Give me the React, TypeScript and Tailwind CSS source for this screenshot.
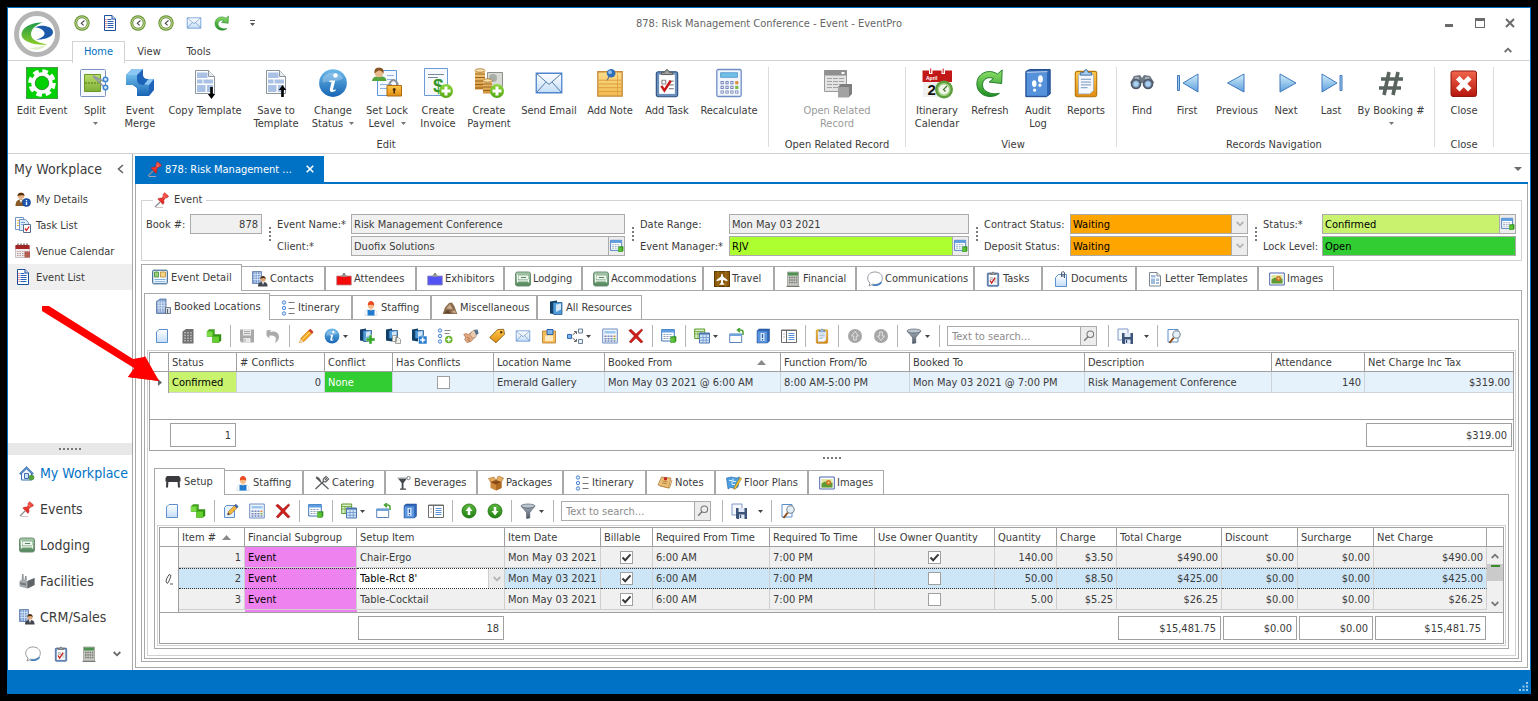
import { Fragment, type ReactNode } from 'react'

// 16x16 artwork, shared by the quick access bar, side bar, tabs and toolbars
const art: Record<string, ReactNode> = {
  clock: (
    <>
      <circle cx="8" cy="8" r="7.7" fill="#5f8c2a" />
      <circle cx="8" cy="8" r="6.8" fill="#b4d481" />
      <circle cx="8" cy="8" r="5.2" fill="#fff" stroke="#5f7f3a" strokeWidth=".8" />
      <path d="M10.500 5.500 7.300 8.200 9.600 10.400" fill="none" stroke="#444" strokeWidth="1.100" />
    </>
  ),
  doc: (
    <>
      <path d="M2.500.5h7.500l3.500 3.500v11.500h-11z" fill="#fff" stroke="#1e4f9c" />
      <path d="M10 .5V4h3.500" fill="#cfe0f7" stroke="#1e4f9c" />
      <path d="M5.500 4.500h4M5.500 6.500h6M5.500 8.500h6M5.500 10.500h6M5.500 12.500h6" stroke="#2b5fb8" />
      <path d="M3.500 4.500h1M3.500 6.500h1M3.500 8.500h1M3.500 10.500h1M3.500 12.500h1" stroke="#e03030" />
    </>
  ),
  mail: (
    <>
      <path d="M1.200 2.800h13.600v10.400H1.200z" fill="url(#gPaper)" stroke="#4f86cf" strokeWidth=".7" />
      <path d="m1.400 3 6.600 5.800L14.600 3M1.400 13l5-5.500M14.600 13l-5-5.500" fill="none" stroke="#4a73a8" strokeWidth=".5" />
    </>
  ),
  refresh: (
    <path
      d="M13 13.500C9 17 1 15 1 8.500 1 3 7 0 12 3.200L14.500 1l-.3 7.300-6.700-.8 2.300-1.900C7 4.300 4 6 4 9c0 3.500 4.500 5.500 9 4.500z"
      fill="url(#gGreen)"
      stroke="#1c7a26"
      strokeWidth=".5"
    />
  ),
  person: (
    <>
      <path d="M.5 15c0-5 2-6.500 5.500-6.500s5 2 5 6.500z" fill="#8a5a28" />
      <path d="M4.500 9 6 12l1.500-3z" fill="#f3efe6" />
      <circle cx="6" cy="4.800" r="3.300" fill="#e6b080" />
      <path d="M2.500 5C2.300.8 9.700.3 9.500 5 8.500 3.500 4.500 4.500 2.500 5z" fill="#54310f" />
      <circle cx="11.500" cy="11.500" r="4" fill="#1b57b5" stroke="#0d3a85" strokeWidth=".6" />
      <path d="M11.500 9v1.200M11.500 11v3" stroke="#fff" strokeWidth="1.300" />
    </>
  ),
  tasklist: (
    <>
      <path d="M.5.5h8v12h-8z" fill="#fff" stroke="#6f96c6" />
      <path d="M2 3.500h3M2 6h3M2 8.500h3" stroke="#e2b040" />
      <path d="M4.500 2.500h6l3 3v8h-9z" fill="#dcebfa" stroke="#6f96c6" />
      <path d="M6 5.500h4M6 7.500h4" stroke="#7aa5dd" />
      <path d="M8.500 7.500h7v8h-7z" fill="#fff" stroke="#5a6f90" />
      <path d="m10 11.500 1.500 2 2.700-4" fill="none" stroke="#cf1f1f" strokeWidth="1.300" />
    </>
  ),
  calendar: (
    <>
      <path d="M.5 3h14v11.500H.5z" fill="#efecec" stroke="#a7a0a0" strokeWidth=".6" />
      <path d="M.5 2h14v4H.5z" fill="#a62424" />
      <path d="M3 .5v2.500M6 .5v2.500M9 .5v2.500M12 .5v2.500" stroke="#6e3c3c" strokeWidth="1.200" />
      <path d="M2 8.500h11M2 10.500h11M2 12.500h11" stroke="#b89a9a" strokeDasharray="1.500 1" />
      <path d="M9.500 8.500H15v6H9.500z" fill="#b55d50" />
    </>
  ),
  pin: (
    <>
      <path d="M6 10 1 15" stroke="#8b8f94" strokeWidth="1.200" />
      <path d="M3.800 7c1.500-1 2.900-1 4.300-.8L9.200 4c-.5-1 .1-2.500 1.500-3.300L14.500 4c-.5 1.600-2 2.200-3.100 1.900L9.700 8.300c.6 1.500.3 2.800-.7 4.100z" fill="url(#gPin)" stroke="#b01212" strokeWidth=".5" />
      <path d="m9.500 4 2 1.700" stroke="#ff9d8f" />
      <path d="M2 15.500h7" stroke="#c7b4b4" strokeWidth=".8" />
    </>
  ),
  bed: (
    <>
      <rect x=".5" y="1" width="15" height="14" rx="2" fill="url(#gBed)" stroke="#6d8f73" />
      <path d="M2.500 3.500v8M13.500 8v3.500M2.500 9.800h11" stroke="#f0f7f0" strokeWidth="1.200" />
      <path d="M4 5h9v3H4z" fill="#dff0df" stroke="#fff" strokeWidth=".8" />
      <path d="M6 6.500h5" stroke="#4a7a52" strokeWidth=".9" />
    </>
  ),
  factory: (
    <>
      <path d="M3 1h1.500l.3 6H2.700zM6 3h1.500l.3 4H5.700z" fill="#8e9499" />
      <path d="m.5 8 4-2 4 2 7-3v7l-7 3.500-8-2z" fill="#a4a9ad" />
      <path d="m8.500 8 7-3v7l-7 3.500z" fill="#5e6468" />
      <path d="M2 9.500v2M4 10v2M6 10.300v2" stroke="#42484c" />
    </>
  ),
  contacts: (
    <>
      <path d="M.5.5h9v12h-9z" fill="#7c9fd0" stroke="#5d7cab" strokeWidth=".8" />
      <path d="M3 1v11M5.500 1v11M8 1v11M1 3.500h8M1 6h8M1 8.500h8" stroke="#d8e5f7" strokeWidth=".8" />
      <path d="M6 15.500c0-3.500 1.500-4.500 4.800-4.500s4.700 1 4.700 4.500z" fill="#42464f" />
      <circle cx="11" cy="8" r="2.700" fill="#e0a878" />
      <path d="M8.300 8c.2-4 5.300-3.700 5.400 0-1.500-1.400-3.500-1-5.400 0z" fill="#463018" />
      <path d="m10 11 1 3 1-3z" fill="#fff" />
    </>
  ),
  home: (
    <>
      <path d="M2.500 8v7h10V8L7.500 3z" fill="#f4f7fb" stroke="#3f6fae" />
      <path d="M.5 8.500 7.500 1.500l7 7-1.200 1L7.500 4l-5.800 5.500z" fill="#5d93d2" stroke="#2e5f9e" strokeWidth=".6" />
      <path d="M5.500 8.500h4v5h-4z" fill="#cfe3f8" stroke="#3f6fae" />
      <circle cx="12.500" cy="12.500" r="2.500" fill="#56a63c" stroke="#2f7a1f" strokeWidth=".5" />
    </>
  ),
  chat: (
    <>
      <path d="M8 1c4.300 0 7.300 2.500 7.300 6.200S12.300 13.400 8 13.400c-.9 0-1.500-.1-2.200-.3L2 15l1-3C1.500 10.800.7 9.200.7 7.200.700 3.500 3.700 1 8 1z" fill="#fff" stroke="#8a8f96" strokeWidth=".9" />
      <path d="M5.500 14c3.500.8 7-.3 9-2.800" fill="none" stroke="#3f7fc0" strokeWidth="1.400" />
    </>
  ),
  clipcheck: (
    <>
      <rect x="2.300" y="2" width="11.400" height="13.300" rx="1" fill="#6a8fbc" stroke="#2c4e7e" strokeWidth=".6" />
      <path d="M3.800 3.500h8.400v10.300H3.800z" fill="#fff" />
      <path d="M5 3.500V2.300h1.700Q8-.6 9.300 2.300H11v1.200z" fill="#a0a0a0" stroke="#555" strokeWidth=".5" />
      <path d="M5.300 6.500h2v2h-2zM9 7h2.600M9 9h2.600M9 11h2.600" fill="none" stroke="#8b8b8b" strokeWidth=".6" />
      <path d="M5 9.500 6.600 12 10 6.800" fill="none" stroke="#c81818" strokeWidth="1.300" />
    </>
  ),
  calc: (
    <>
      <path d="M2.500 1h11v14h-11z" fill="#c6c9c1" stroke="#85887f" strokeWidth=".6" />
      <path d="M3 1.500h10v3H3z" fill="#4e9150" />
      <path d="M4 6.500h8.500M4 9h8.500M4 11.500h8.500" stroke="#777a73" strokeWidth="1.400" strokeDasharray="1.500 .8" />
      <path d="M1.500 15.500h13" stroke="#777a73" />
    </>
  ),
  detail: (
    <>
      <rect x=".7" y="1.200" width="14.600" height="13.600" rx="1" fill="#f2f8ff" stroke="#24567f" />
      <path d="M2.500 3h4v5h-4z" fill="#9ad07a" stroke="#3f8c2f" strokeWidth=".8" />
      <path d="M8.500 3h5v5h-5z" fill="#f6d58d" stroke="#be8a2a" strokeWidth=".8" />
      <path d="M2.500 10.500h11M2.500 12.700h11" stroke="#7fb0dd" />
    </>
  ),
  badgeRed: (
    <>
      <path d="M7 5.500V3q1-1.500 2 0v2.500" fill="#aaa" stroke="#777" />
      <path d="M.7 5h14.600v9H.7z" fill="#f40808" stroke="#b98a8a" strokeWidth=".8" />
      <path d="M5.500 5h5" stroke="#999" strokeWidth="1.500" />
    </>
  ),
  badgeBlue: (
    <>
      <path d="M7 5.500V3q1-1.500 2 0v2.500" fill="#aaa" stroke="#777" />
      <path d="M.7 5h14.600v9H.7z" fill="#5252f5" stroke="#8f8fae" strokeWidth=".8" />
      <path d="M5.500 5h5" stroke="#999" strokeWidth="1.500" />
    </>
  ),
  plane: (
    <>
      <rect x=".5" y=".5" width="15" height="15" fill="#8a5a0c" stroke="#5f3c05" />
      <path d="M4 0v16M12 0v16" stroke="#a9731c" />
      <path d="M8 2.500q1 .5 1 3L13.500 9v1.300L9 9v2.800l1.500 1.200v.8H5.500V13L7 11.800V9l-4.500 1.300V9L7 5.500q0-2.500 1-3z" fill="#fff" />
    </>
  ),
  clipdoc: (
    <>
      <path d="m5.500 3.500-3 3v9h11v-12z" fill="url(#gPaper)" stroke="#5c8fcd" />
      <path d="M8.500 6V1.500q1.500-1.800 3 0V7M10 3v3" fill="none" stroke="#4a5a70" />
    </>
  ),
  template: (
    <>
      <path d="M2.500 1.500h7.500l3.500 3.500v10h-11z" fill="#fff" stroke="#7d8791" />
      <path d="M10 1.500V5h3.500" fill="#e6ecf2" stroke="#7d8791" />
      <path d="M4 4h4.500v2.500H4zM4 7.500h4V13H4zM9 7.500h3V10H9zM9 11h3v2H9z" fill="#9ebbe0" />
    </>
  ),
  image: (
    <>
      <path d="M.7 2h14.600v12H.7z" fill="#fff" stroke="#4d66ad" />
      <path d="M2.500 4h11v8.500h-11z" fill="#dfe7a0" />
      <path d="M2.500 8.500 6 6.500l3 2 4.500-1v5h-11z" fill="#5d9a35" />
      <circle cx="9.500" cy="7.500" r="2.600" fill="#c9762a" />
      <circle cx="9.500" cy="7.500" r="1" fill="#f7d070" />
    </>
  ),
  building: (
    <>
      <path d="M1.500 3.500 5 1h6v14.500H1.500z" fill="#8ba9d4" stroke="#51709f" strokeWidth=".8" />
      <path d="M4 3v11M6.500 3v11M9 3v11M2 5h8.500M2 7.500h8.500M2 10h8.500" stroke="#e3edf9" strokeWidth=".7" />
      <path d="M10.500 9.500h5v6h-5z" fill="#d7dee9" stroke="#55606f" strokeWidth=".8" />
      <path d="M12.500 11v4" stroke="#55606f" />
    </>
  ),
  buildingGray: (
    <>
      <path d="M2.500 3.500 6 1h7.500v14.500h-11z" fill="#707070" />
      <path d="M5 4v10M8 4v10M11 4v10" stroke="#cfcfcf" strokeWidth="1.300" strokeDasharray="1.500 1.200" />
    </>
  ),
  itinerary: (
    <>
      <circle cx="4" cy="2.500" r="1.700" fill="#e4effc" stroke="#4f86d6" />
      <circle cx="4" cy="8" r="1.700" fill="#e4effc" stroke="#4f86d6" />
      <circle cx="4" cy="13.500" r="1.700" fill="#e4effc" stroke="#4f86d6" />
      <path d="M8.500 2.500h6M8.500 8.500h6M8.500 13.500h6" stroke="#777" />
    </>
  ),
  itinAdd: (
    <>
      <circle cx="3" cy="2.500" r="1.700" fill="#e4effc" stroke="#4f86d6" />
      <circle cx="3" cy="8" r="1.700" fill="#e4effc" stroke="#4f86d6" />
      <circle cx="3" cy="13.500" r="1.700" fill="#e4effc" stroke="#4f86d6" />
      <path d="M7.500 2.500h6M7.500 5.500h5" stroke="#888" />
      <circle cx="11.800" cy="11.500" r="3.800" fill="#6cb52e" />
      <path d="M11.800 9.200v4.600M9.500 11.500h4.600" stroke="#fff" strokeWidth="1.400" />
    </>
  ),
  staff: (
    <>
      <path d="M2 15.500C1.700 10.500 4 9 8 9s6.300 1.500 6 6.500z" fill="#fff" stroke="#b8c6d3" strokeWidth=".5" />
      <path d="M4.500 10h7v5.500h-7z" fill="#1f7bd0" />
      <circle cx="8" cy="5.800" r="3" fill="#f2b986" />
      <path d="M4.800 5.500C4.500-.5 11.500-.5 11.200 5.500 9.500 4.500 6.500 4.500 4.800 5.500z" fill="#ea4a1f" />
      <path d="M6.500 9.500 8 11l1.500-1.500z" fill="#f2b986" />
    </>
  ),
  misc: (
    <>
      <path d="M.7 14 3 7.500 7 3l3-.5 2.500 4 2.800 7.500z" fill="#8a6a4c" />
      <path d="M4 8.500 8 4l3 5.500zM9 12l4-2 1 3.500z" fill="#c9a98a" />
      <path d="m2 13 4-3 3 3.500z" fill="#5d4630" />
    </>
  ),
  book: (
    <>
      <path d="m2 1.500 7-1v14l-7-1z" fill="#123f68" />
      <path d="M5 2.500h9v12H6.500L5 14z" fill="#4f9ad8" stroke="#1d4d7c" strokeWidth=".7" />
      <path d="m8 4.500 5-1v6L8 12z" fill="#d2e6f8" />
    </>
  ),
  bookPlus: (
    <>
      <path d="m1 1.500 6-1v13l-6-1z" fill="#123f68" />
      <path d="M4 2.500h8.500v11H5L4 13z" fill="#4f9ad8" stroke="#1d4d7c" strokeWidth=".7" />
      <path d="m7 4 4.500-1v4L7 9.500z" fill="#d2e6f8" />
      <path d="M10 7h3v3h3v3h-3v3h-3v-3H7v-3h3z" fill="#35a82c" stroke="#fff" strokeWidth=".4" />
    </>
  ),
  bookCopy: (
    <>
      <path d="m1 1.500 6-1v13l-6-1z" fill="#123f68" />
      <path d="M4 2.500h8.500v8H4z" fill="#4f9ad8" stroke="#1d4d7c" strokeWidth=".7" />
      <path d="m7 4 4.500-1v4L7 9.500z" fill="#d2e6f8" />
      <path d="M7.500 7.500h4v6h-4zM10.500 9.500h3l2 2v4h-5z" fill="#f1f1ee" stroke="#8d8d88" strokeWidth=".8" />
    </>
  ),
  bookAdd: (
    <>
      <path d="m1 1.500 6-1v13l-6-1z" fill="#123f68" />
      <path d="M4 2.500h8.500v8H4z" fill="#4f9ad8" stroke="#1d4d7c" strokeWidth=".7" />
      <path d="m7 4 4.500-1v4L7 8.500z" fill="#d2e6f8" />
      <path d="M7.500 8H16v8H7.500z" fill="#2f7fd1" stroke="#fff" strokeWidth=".5" />
      <path d="M11.700 9.500v5M9.200 12h5" stroke="#fff" strokeWidth="1.500" />
    </>
  ),
  blank: <path d="m5 1.500-2.500 2.500v10.500h11v-13z" fill="url(#gPaper)" stroke="#5c8fcd" />,
  cubes: (
    <>
      <path d="m1 3.500 2-2h5.500v5l-2 2H1z" fill="#3fa519" stroke="#2f8710" strokeWidth=".4" />
      <path d="M1 3.500h5.500v5H1z" fill="#7bdc45" />
      <path d="m6.500 8.500 2-2H15v6l-2 2H6.500z" fill="#2f9410" stroke="#2f8710" strokeWidth=".4" />
      <path d="M6.500 8.500H13v6H6.500z" fill="#66cf30" />
    </>
  ),
  save: (
    <>
      <path d="M1 1.500h14v13H2.500L1 13z" fill="#a8a8a8" />
      <path d="M4 1.500h8v6H4zM4.500 10h7v4.500h-7z" fill="#e9e9e9" />
      <path d="M5 3.500h6M5 5.500h6M6 11v2.500" stroke="#a8a8a8" />
    </>
  ),
  undo: <path d="M1.500 2.500 6 1.800 5 4c4-1.500 9 0 9 5 0 3-2 5-4.500 6 2.500-3.500 2-7.500-3-7.500L4 7.800l.8 2.700L1.500 8z" fill="#ababab" />,
  pencil: (
    <>
      <path d="M1.500 14.800 3 10l8-8 3.300 3.300-8 8z" fill="#f5a623" stroke="#b86b10" strokeWidth=".5" />
      <path d="m10.500 2.500 1.800-1.700 3.300 3.100-1.800 1.800z" fill="#cf3a2a" />
      <path d="M1.500 14.800 2.700 11l2.700 2.700z" fill="#f4dcb4" />
      <path d="m4.500 11.500 7.500-7.500" stroke="#fde08c" />
    </>
  ),
  info: (
    <>
      <circle cx="8" cy="8" r="7.400" fill="url(#gBlue)" />
      <path d="M2.500 5.500C4 1.500 12 1.500 13.500 5.500 10 8 6 6.500 2.500 8z" fill="#fff" opacity=".25" />
      <circle cx="9.300" cy="4" r="1.200" fill="#fff" />
      <path d="M6.200 6.700h3L8 11.300q0 .8 1.500 0l-.2.9q-3.300 1.500-3-.7L7.200 7.600l-1.200-.1z" fill="#fff" />
    </>
  ),
  hands: (
    <>
      <path d="M.7 6.500 3 5.500l2.500 1 3-2.500 3 2 .5 3-4 4.500L4 14.500 1.500 11l1.500-1z" fill="#e3a87e" stroke="#9a6040" strokeWidth=".6" />
      <path d="m7 6.500 3-4 3-.5 1.500 3-2 4.500-3 .5z" fill="#eccaae" stroke="#8f7a6a" strokeWidth=".5" />
      <path d="m11 2 3.500-.5 1.200 4L13 7z" fill="#54718f" />
      <path d="m4 9 3 2M4.500 11.500 7 13" stroke="#9a6040" strokeWidth=".7" />
    </>
  ),
  tag: (
    <>
      <path d="m.7 9.500 8-8 6-.2.8 5L7 14.800z" fill="url(#gGold)" stroke="#7d5210" strokeWidth=".8" />
      <circle cx="12.200" cy="4.300" r="1.200" fill="#5a3a0a" />
    </>
  ),
  note: (
    <>
      <path d="M1.500 2h13v13h-13z" fill="url(#gNote)" stroke="#c48a3a" strokeWidth=".7" />
      <path d="M2 6.500h12M2 8.500h12M2 10.500h12M2 12.500h12" stroke="#dc9c38" strokeWidth=".5" />
      <path d="M12 3v12" stroke="#dc9c38" strokeWidth=".4" />
      <path d="M7.500 4.500 6.500 6.500" stroke="#777" strokeWidth=".7" />
      <circle cx="8.600" cy="2.800" r="2.300" fill="#2f6fb8" />
      <circle cx="8" cy="2.200" r="1" fill="#8fbdeb" />
    </>
  ),
  noteSmall: (
    <>
      <path d="M1.500 3h13v12h-13z" fill="#f5bc58" stroke="#b57a28" strokeWidth=".8" />
      <path d="M4 7.500h8v5.500H4z" fill="#fdeac2" />
      <path d="M6 1.500h6v5H6z" fill="#7fb4ea" stroke="#2f62a8" />
    </>
  ),
  share: (
    <>
      <path d="M.5 6.500h4v4h-4z" fill="#7eb2ea" stroke="#2f6cb3" />
      <path d="M11.500 1h4v4h-4zM11.500 11.500h4v4h-4z" fill="#eaf3fc" stroke="#6b7f96" />
      <path d="M5.500 7 9 4M5.500 10l3.500 3M7 3.500h2.500V6M7 13.500h2.500V11" fill="none" stroke="#666" />
    </>
  ),
  calcBlue: (
    <>
      <rect x="1.500" y=".8" width="13" height="14.400" rx=".8" fill="#f1f5fc" stroke="#6f8fc4" strokeWidth=".7" />
      <path d="M3.500 2.500h9v2.500h-9z" fill="#6fbfe8" stroke="#4a90c6" strokeWidth=".4" />
      <path d="M3.500 7.800h7M3.500 10.300h7M3.500 12.800h9.500" stroke="#7484b8" strokeWidth="1.700" strokeDasharray="1.700 .9" />
      <path d="M4 7.800h6.500M4 10.300h6.500M4 12.800h9" stroke="#fff" strokeWidth=".7" strokeDasharray=".7 1.900" />
      <path d="M11.300 7h1.700v1.700h-1.700z" fill="#e08a3c" />
      <path d="M11.300 9.500h1.700v1.700h-1.700z" fill="#7dbb3c" />
    </>
  ),
  calcWide: (
    <>
      <path d="M.7 1h14.600v14H.7z" fill="#f1f5fc" stroke="#6f8fc4" />
      <path d="M2.500 3h11v2.500h-11z" fill="#9cc8f0" />
      <path d="M2.500 8.300h8M2.500 10.700h8M2.500 13h11" stroke="#7484b8" strokeWidth="1.400" strokeDasharray="2 1" />
      <path d="M11.500 7.500h2v1.600h-2z" fill="#e08a3c" />
      <path d="M11.500 9.900h2v1.600h-2z" fill="#7dbb3c" />
    </>
  ),
  del: <path d="m.7 2.500 2.300-1.200L8 6 13.500 1l1.300 1L9.700 8l5.300 5.700-2 1.300L8 10l-5 5-1.800-1.200L6.300 8z" fill="#d0201c" stroke="#8e0f0f" strokeWidth=".5" />,
  lookup: (
    <>
      <path d="M.7 1.500h12.600v11.500H.7z" fill="#fff" stroke="#3c74b8" />
      <path d="M.7 1.500h12.600v3H.7z" fill="#5d9ee0" />
      <path d="M2.500 6.500h9M2.500 8.500h9M2.500 10.500h9" stroke="#8aa0ba" strokeDasharray="2 1" />
      <path d="m9.500 9.500 1.200-1.200h4.600V13L14 14.800H9.500z" fill="#2f8f1c" />
      <path d="M9.500 9.500h4.300v5H9.500z" fill="#5cc03a" />
    </>
  ),
  views: (
    <>
      <path d="M.7 1h10v9.500H.7z" fill="#dcefc6" stroke="#5a9a2e" />
      <path d="M.7 3.500h10M4 3.500v7M7 3.500v7M.7 6h10" stroke="#5a9a2e" strokeWidth=".7" />
      <path d="M5.500 5h10v10h-10z" fill="#d3e5fa" stroke="#4a74ae" />
      <path d="M5.500 5.800h10" stroke="#4a74ae" strokeWidth="1.600" />
      <path d="M5.500 9.500h10M5.500 12.200h10M9 7v8M12.200 7v8" stroke="#5f8cc4" strokeWidth=".7" />
    </>
  ),
  reset: (
    <>
      <path d="M.7 6h12v8.500H.7z" fill="#fff" stroke="#5b84b8" />
      <path d="M.7 5.800h12V8H.7z" fill="#6fa3dc" />
      <path d="M14 7V4q0-2-2.500-2H9M11 0 8.500 2 11 4.200" fill="none" stroke="#49a033" strokeWidth="1.500" />
    </>
  ),
  audit: (
    <>
      <path d="M1.500 1.800 3.500.8h11v13l-2 1.500h-11z" fill="#2d64b4" stroke="#1c4788" strokeWidth=".5" />
      <path d="M2 2.500h10.800v12.300H2z" fill="#5691dc" />
      <path d="M2 2.300 13 2" stroke="#dce9f8" strokeWidth=".6" />
      <ellipse cx="9.300" cy="5.800" rx="1.300" ry="2" fill="#fff" />
      <ellipse cx="9" cy="9.200" rx=".8" ry=".9" fill="#fff" />
      <ellipse cx="6" cy="8.300" rx="1.200" ry="1.800" fill="#fff" />
      <ellipse cx="6.200" cy="11.800" rx=".8" ry=".9" fill="#fff" />
    </>
  ),
  notebook: (
    <>
      <path d="M2 2.800 4 1h10.500v12l-2 2H2z" fill="#2d64b4" stroke="#1c4788" strokeWidth=".5" />
      <path d="M2.500 3.300h9.700v11.400H2.500z" fill="#5b95de" />
      <path d="M5.500 5h4v8h-4z" fill="#dbe8f8" />
      <path d="M7.500 6v4M7.500 11v1.500" stroke="#2d64b4" strokeWidth="1.300" />
    </>
  ),
  columns: (
    <>
      <path d="M.5 2h15v12.500H.5z" fill="#fff" stroke="#6c6c6c" />
      <path d="M.5 2.500h15M5.500 2v12" stroke="#6c6c6c" />
      <path d="M7.500 5.500h6M7.500 7.500h6M7.500 9.500h6M7.500 11.500h6" stroke="#5b92d6" />
      <path d="M2 6h2M2 9h2" stroke="#bbb" />
    </>
  ),
  reports: (
    <>
      <rect x="2.300" y="1.800" width="11.400" height="13.500" rx="1" fill="url(#gGold)" stroke="#b37708" strokeWidth=".6" />
      <path d="M4 3.500h8v8.500l-2 1.800H4z" fill="#f5f9ff" stroke="#98a9bd" strokeWidth=".4" />
      <path d="M5 3.800V2.500h1.700q1.300-3.500 2.600 0H11v1.300z" fill="#a9cbee" stroke="#3e6fa8" strokeWidth=".5" />
      <path d="M5.300 6h5.400M5.300 7.500h5.400M5.300 9h5.400M5.300 10.500h3.500" stroke="#6f8fb5" strokeWidth=".5" />
    </>
  ),
  upGray: (
    <>
      <circle cx="8" cy="8" r="7" fill="#a6a6a6" />
      <path d="M8 3.500 11.500 8H9.300v4H6.700V8H4.500z" fill="none" stroke="#e2e2e2" />
    </>
  ),
  downGray: (
    <>
      <circle cx="8" cy="8" r="7" fill="#a6a6a6" />
      <path d="M8 12.500 4.500 8h2.200V4h2.600v4h2.200z" fill="none" stroke="#e2e2e2" />
    </>
  ),
  up: (
    <>
      <circle cx="8" cy="8" r="7" fill="url(#gDeep)" stroke="#1f6d12" strokeWidth=".8" />
      <path d="M8 3.500 11.500 8H9.300v4H6.700V8H4.500z" fill="#fff" />
    </>
  ),
  down: (
    <>
      <circle cx="8" cy="8" r="7" fill="url(#gDeep)" stroke="#1f6d12" strokeWidth=".8" />
      <path d="M8 12.500 4.500 8h2.200V4h2.600v4h2.200z" fill="#fff" />
    </>
  ),
  filter: (
    <>
      <path d="M1 3c3 2.500 11 2.500 14 0L9.800 9.500V15l-3.300.5v-6z" fill="url(#gSteel)" stroke="#454d57" strokeWidth=".5" />
      <ellipse cx="8" cy="3" rx="7" ry="2" fill="#bcc6d0" stroke="#454d57" strokeWidth=".6" />
    </>
  ),
  saveAs: (
    <>
      <path d="M1 1h10v11H1z" fill="#f4f8fd" stroke="#8099c6" />
      <path d="M5 5h11v11H6l-1-1z" fill="#3c5478" />
      <path d="M7.500 5h6v4h-6zM8 11.500h5.500V16H8z" fill="#dfe8f4" />
      <path d="M9.500 12v3" stroke="#3c5478" strokeWidth="1.300" />
    </>
  ),
  preview: (
    <>
      <path d="M2 1.500h10v12.500H2z" fill="#fff" stroke="#5c8fcd" />
      <path d="M7.800 9.500 3.500 15" stroke="#8b4a1a" strokeWidth="2" />
      <circle cx="10.500" cy="6.500" r="3.700" fill="#e4eff8" stroke="#7c8790" strokeWidth="1.100" />
    </>
  ),
  table: (
    <path d="M.5 5 2 3h12l1.500 2v3.500h-.8l.3 6h-2l-.4-5.500H3.400L3 14.500H1l.3-6H.5z" fill="#3b3b3f" />
  ),
  cutlery: (
    <path d="M2 2.500 14.500 14M1.500 14 9.500 6.500M12.500 1 9.300 4.200q-.5 1.300.4 2.200 1 .9 2.200.3L15 3.500M13.800 2.200 11 5M2 2q3.500.500 4.500 4.500" fill="none" stroke="#56585b" strokeWidth="1.200" />
  ),
  drink: (
    <>
      <path d="M2 3.500h9L7.500 8v5.500H10v1.300H4v-1.300h1.700V8z" fill="#44484c" />
      <circle cx="12.500" cy="3" r="1.700" fill="none" stroke="#7b8084" />
      <path d="M1.500 3h10" stroke="#9aa0a4" />
    </>
  ),
  package: (
    <>
      <path d="M2.500 7h11v6L8 15.500 2.500 13z" fill="#d08a3c" />
      <path d="M8 9.500 13.500 7v6L8 15.500z" fill="#b06a22" />
      <path d="M2.500 7 .5 3.500 6 2l2 3 2.500-4L15.500 3l-2 4L8 9.500z" fill="#e5ad60" stroke="#9a5a18" strokeWidth=".5" />
      <path d="M2.500 7 8 5l5.500 2L8 9.500z" fill="#8a4c16" />
    </>
  ),
  notes: (
    <>
      <path d="m4.500 2 9.500 1-2.500 10L1 10z" fill="#ecc27a" stroke="#a5722a" strokeWidth=".7" />
      <path d="m3 11 9.500 2 2.500-8" fill="none" stroke="#c7944a" />
      <path d="m5.500 6 5 1M5 8l5 1" stroke="#a5722a" strokeWidth=".8" />
      <circle cx="8.500" cy="3.800" r="1.700" fill="#c62424" />
    </>
  ),
  floor: (
    <>
      <path d="m.5 3 5-1 5 1 3-1-1.500 10-3 1.500-4.500-1L2 14z" fill="#4d9fdf" stroke="#2462a0" strokeWidth=".6" />
      <path d="M3 5.500h3v4h3M7 3.500v3h3" fill="none" stroke="#d9edfc" />
      <path d="m8 12.500 6-10 1.700 1L9.800 13.600 8 14.500z" fill="#f5c53a" stroke="#8b6a10" strokeWidth=".5" />
    </>
  ),
  editForm: (
    <>
      <path d="M3.500 2.500h8v12h-10v-10z" fill="#e6f1fd" stroke="#5c8fcd" />
      <path d="m4.500 12 1-3.500 7-7L15 4l-7 7z" fill="#f3b63f" stroke="#7a5a20" strokeWidth=".5" />
      <path d="m11.300 2.700 1.700-1.700 2.500 2.500-1.700 1.700z" fill="#3c5fae" />
      <path d="m4.500 12 .7-2.500 1.700 1.700z" fill="#333" />
    </>
  ),
  search: (
    <>
      <circle cx="9.500" cy="6" r="3.800" fill="none" stroke="#777" strokeWidth="1.200" />
      <path d="M6.800 8.800 2.500 13.500" stroke="#777" strokeWidth="1.600" />
    </>
  ),
}

// 32x32 artwork for the ribbon
const bigArt: Record<string, ReactNode> = {
  gear: (
    <>
      <path d="M0 0h32v32H0z" fill="#00d000" />
      <path d="M.5.5h31v31H.5z" fill="none" stroke="#4c9a4c" />
      <circle cx="16" cy="16" r="11.500" fill="none" stroke="#fff" strokeWidth="4.500" strokeDasharray="5.400 3.630" />
      <circle cx="16" cy="16" r="8.700" fill="none" stroke="#fff" strokeWidth="4" />
      <circle cx="16" cy="16" r="6.800" fill="#00d000" stroke="#3f5a3f" strokeWidth=".6" />
    </>
  ),
  split: (
    <>
      <rect x="1.500" y="2.500" width="25" height="27" rx="1" fill="#f5f8fd" stroke="#7d93bf" />
      <path d="M5.500 7.500h16v17h-16z" fill="url(#gLeaf)" stroke="#6b9828" />
      <path d="M6 16h15" stroke="#4f7a15" strokeDasharray="2 1" />
      <path d="m14 9 10 10M14 9l10 5" stroke="#8f98a3" strokeWidth="1.600" />
      <circle cx="26.500" cy="12.500" r="2.200" fill="#dcecfb" stroke="#3f86ce" strokeWidth="1.600" />
      <circle cx="26.500" cy="20.500" r="2.200" fill="#dcecfb" stroke="#3f86ce" strokeWidth="1.600" />
    </>
  ),
  merge: (
    <>
      <path d="m2 8 6-6h11v6q.5 4 5 4h6v11l-5 6H13v-8L9 18H2z" fill="#1d63b8" />
      <path d="M2 8h11v6q1 4 6 4h6v11H13v-7q-1-4-5-4H2z" fill="url(#gBlue)" />
      <path d="m2 8 6-6h11l-6 6zM20 17.500l4.500-5.500H30l-5 6z" fill="#8cc6f5" />
    </>
  ),
  copyTemplate: (
    <>
      <path d="M6.500 3.500h13l6 6v17h-19z" fill="#fff" stroke="#8b939b" />
      <path d="M19.500 3.500v6h6" fill="#e8edf2" stroke="#8b939b" />
      <path d="M8 5.500h10.500V11H8zM8 12.500h5.500v4H8zM14.500 12.500H24v4h-9.500zM8 18h8.500v7H8zM18 18h6v7h-6z" fill="#a9c1e4" />
      <path d="M21.200 20h2.600v7h2.400L22.500 32l-3.700-5h2.400z" fill="#000" />
    </>
  ),
  saveTemplate: (
    <>
      <path d="M6.500 3.500h13l6 6v17h-19z" fill="#fff" stroke="#8b939b" />
      <path d="M19.500 3.500v6h6" fill="#e8edf2" stroke="#8b939b" />
      <path d="M8 5.500h10.500V11H8zM8 12.500h5.500v4H8zM14.500 12.500H24v4h-9.500zM8 18h8.500v7H8zM18 18h6v7h-6z" fill="#a9c1e4" />
      <path d="M21.200 30h2.600v-7h2.400l-3.700-5-3.700 5h2.400z" fill="#000" />
    </>
  ),
  lock: (
    <>
      <path d="M12.500 3.500h13v25h-19v-17z" fill="#f4f9ff" stroke="#5f98da" />
      <path d="M16 8.500h7M16 12.500h7M9 17.500h12M9 21.500h8" stroke="#8fb4e2" />
      <path d="M1 14q.5-4.500 5-4.500h5q4 0 4.500 4.500z" fill="#56a33c" />
      <circle cx="8" cy="6" r="4.300" fill="#e8ba8c" />
      <path d="M3.500 6.500Q2.500.5 8 .5t4.600 6Q10 3 8 3.500T3.500 6.500z" fill="#8a5524" />
      <path d="M18.500 19v-2.500q4-7 8 0V19" fill="none" stroke="#8c949d" strokeWidth="2" />
      <path d="M16 18.500h14.500v10.500H16z" fill="url(#gGold)" stroke="#b06a10" />
      <circle cx="23.200" cy="22.500" r="1.500" fill="#4a2d06" />
      <path d="M23.200 23v3.500" stroke="#4a2d06" strokeWidth="1.600" />
    </>
  ),
  invoice: (
    <>
      <path d="M2.500 1.500h23v27h-23z" fill="#f6faff" stroke="#6b9bd2" />
      <path d="M6 7.500h16M6 10.500h10" stroke="#7b8896" />
      <text x="11" y="25" fontSize="19" fontWeight="700" fill="#33962a" fontFamily="Liberation Sans, sans-serif">$</text>
      <circle cx="24" cy="24" r="7" fill="url(#gLime)" />
      <path d="M24 19.500v9M19.500 24h9" stroke="#fff" strokeWidth="3" />
    </>
  ),
  payment: (
    <>
      <path d="M14.500 5.500h15v14h-15z" fill="#d8dad6" stroke="#8c8f8a" />
      <circle cx="20" cy="11" r="4" fill="#a9ada7" />
      <path d="M2 3.500h10v19H2z" fill="url(#gCoin)" />
      <path d="M2 7h10M2 10.500h10M2 14h10M2 17.500h10M2 21h10" stroke="#9a6117" />
      <ellipse cx="7" cy="3.500" rx="5" ry="1.800" fill="#fbe2ac" stroke="#9a6117" strokeWidth=".7" />
      <path d="M10 13.500h9v13h-9z" fill="url(#gCoin)" />
      <path d="M10 17h9M10 20h9M10 23.500h9" stroke="#9a6117" />
      <ellipse cx="14.500" cy="13.500" rx="4.500" ry="1.700" fill="#fbe2ac" stroke="#9a6117" strokeWidth=".7" />
      <circle cx="24" cy="24" r="7" fill="url(#gLime)" />
      <path d="M24 19.500v9M19.500 24h9" stroke="#fff" strokeWidth="3" />
    </>
  ),
  related: (
    <>
      <path d="M3.500 3.500h22v21h-22z" fill="#e3e3e3" stroke="#9a9a9a" />
      <path d="M3.500 3h22v5.500h-22z" fill="#8f8f8f" />
      <path d="M20.500 6h3" stroke="#fff" strokeWidth="2" />
      <path d="M6 11.500h18M6 14.500h18M6 17.500h18M6 20.500h12" stroke="#a3a3a3" strokeDasharray="5 1" />
      <path d="m17 20 3-3h11v10l-3 3H17z" fill="#7e7e7e" />
      <path d="M17 20h11v10.500H17z" fill="#a2a2a2" />
    </>
  ),
  itinCal: (
    <>
      <path d="M2 10h28v20H2z" fill="#f0f0f0" />
      <path d="M1.500 3.500H31V15H1.500z" fill="#c21818" />
      <path d="M8 1.500h3.500V7H8zM20.500 1.500H24V7h-3.500z" fill="#fff" />
      <path d="M9.700 1.500V6M22.200 1.500V6" stroke="#c21818" />
      <text x="5" y="13" fontSize="5" fontWeight="700" fill="#fff" fontFamily="Liberation Sans, sans-serif">April</text>
      <text x="6.500" y="28" fontSize="15" fontWeight="700" fill="#111" fontFamily="Liberation Sans, sans-serif">2</text>
      <circle cx="23" cy="22.500" r="9" fill="#5d9e3c" />
      <circle cx="23" cy="22.500" r="5.800" fill="#eff7e8" stroke="#a4cf85" strokeWidth="1.500" />
      <path d="m26 19-3.500 3.500 2 2" fill="none" stroke="#47703a" strokeWidth="1.200" />
    </>
  ),
  binoculars: (
    <>
      <path d="M4 16 8 9l6-1 2 3 2-3 6 1 4.500 7z" fill="#6e7784" />
      <path d="M9 10h4v4H8zM19 10h4l1 4h-5z" fill="#a8b2be" />
      <circle cx="10" cy="17" r="5.300" fill="#4f5a69" />
      <circle cx="22" cy="17" r="5.300" fill="#4f5a69" />
      <circle cx="10" cy="17" r="3.200" fill="#a9d0f0" stroke="#7a96b8" />
      <circle cx="22" cy="17" r="3.200" fill="#a9d0f0" stroke="#7a96b8" />
    </>
  ),
  first: (
    <>
      <path d="M6.500 8.500h2v15h-2z" fill="#9fcaf0" stroke="#4079bd" />
      <path d="M27 7v18L12 16z" fill="url(#gArrow)" stroke="#4079bd" />
    </>
  ),
  prev: <path d="M23 7v18L6.500 16z" fill="url(#gArrow)" stroke="#4079bd" />,
  next: <path d="M10 7v18l16-9z" fill="url(#gArrow)" stroke="#4079bd" />,
  last: (
    <>
      <path d="M25 8.500h2v15h-2z" fill="#9fcaf0" stroke="#4079bd" />
      <path d="M7 7v18l15-9z" fill="url(#gArrow)" stroke="#4079bd" />
    </>
  ),
  hash: <path d="m14 5-5 23M23 5l-5 23M6 12h22M4 21h22" stroke="#5a645e" strokeWidth="3.600" />,
  close: (
    <>
      <rect x="3" y="4" width="25.500" height="25.500" rx="2" fill="url(#gRed)" stroke="#8e1a12" />
      <path d="m11.500 12.500 8.500 8.500M20 12.500l-8.500 8.500" stroke="#fff" strokeWidth="5" strokeLinecap="square" />
    </>
  ),
}

const gradients: [string, string, string][] = [
  ['gBlue', '#6dbbea', '#1764b4'],
  ['gGreen', '#8fe06a', '#1f8f22'],
  ['gDeep', '#5cb83c', '#1f7f12'],
  ['gLime', '#8ed63c', '#56a612'],
  ['gLeaf', '#b9dc6c', '#7faf35'],
  ['gRed', '#f2664c', '#b5150c'],
  ['gPin', '#ff5a4c', '#d8201c'],
  ['gPaper', '#ffffff', '#c4ddf7'],
  ['gNote', '#fbdc8c', '#f3bb52'],
  ['gGold', '#ffc94a', '#e08c10'],
  ['gCoin', '#f5cf86', '#cf9238'],
  ['gSteel', '#a5b0bc', '#4d5865'],
  ['gArrow', '#d5f0fb', '#5b9fdd'],
  ['gBed', '#a9cbae', '#4f8557'],
]

function Gradients() {
  return (
    <svg width="0" height="0" className="absolute" aria-hidden="true">
      <defs>
        {gradients.map(([id, from, to]) => (
          <linearGradient key={id} id={id} x1="0" y1="0" x2="0" y2="1">
            <stop offset="0" stopColor={from} />
            <stop offset="1" stopColor={to} />
          </linearGradient>
        ))}
      </defs>
    </svg>
  )
}

function Icon({ name }: { name: string }) {
  return (
    <svg viewBox="0 0 16 16" className="w-4 h-4 shrink-0" aria-hidden="true">
      {art[name]}
    </svg>
  )
}

function BigIcon({ name }: { name: string }) {
  if (bigArt[name]) {
    return (
      <svg viewBox="0 0 32 32" className="w-8 h-8 shrink-0" aria-hidden="true">
        {bigArt[name]}
      </svg>
    )
  }
  return (
    <svg viewBox="0 0 16 16" className="w-8 h-8 p-px shrink-0" aria-hidden="true">
      {art[name]}
    </svg>
  )
}

function Caret({ className = 'text-[#444]' }: { className?: string }) {
  return (
    <svg viewBox="0 0 5 3" className={`w-[5px] h-[3px] shrink-0 ${className}`} aria-hidden="true">
      <path d="M0 0h5L2.500 3z" fill="currentColor" />
    </svg>
  )
}

function Chevron({ className, up = false }: { className: string; up?: boolean }) {
  return (
    <svg viewBox="0 0 8 6" className={`w-2 h-[6px] shrink-0 ${className}`} aria-hidden="true">
      <path d={up ? 'M.7 5 4 1.700 7.300 5' : 'M.7 1 4 4.300 7.300 1'} fill="none" stroke="currentColor" strokeWidth="1.800" />
    </svg>
  )
}

const quickAccess = ['clock', 'doc', 'clock', 'clock', 'mail', 'refresh']

function TitleBar() {
  return (
    <header className="grid grid-cols-[1fr_auto_1fr] h-[52px] shrink-0">
      <div className="flex">
        <svg viewBox="0 0 46 46" className="w-[46px] h-[46px] ml-[6px] mt-[3px] mr-3" role="img" aria-label="EventPro">
          <circle cx="23" cy="23" r="20.500" fill="#fff" stroke="#b5b5b5" strokeWidth="5" />
          <path d="M29 11.500C17 11 7 17 7.500 24c.5 6 12 11 26 9.500C24 32 17 28.500 17 23.500 17 18 22 13.500 29 11.500z" fill="url(#gLogo)" />
          <path d="M21 16.500c6-3.500 17.500-1.500 18 4.500.3 5-9 8-17 7.500 5-1 9-3.500 8.500-6.500C30 19 26 16.500 21 16.500z" fill="#1a5aa8" />
          <path d="M14 37c6-.2 12-1 18-3-3 4-6 3.500-9 5z" fill="#e1edc4" />
          <defs>
            <linearGradient id="gLogo" x1="0" y1="0" x2="0" y2="1">
              <stop offset="0" stopColor="#1f9a4a" />
              <stop offset="1" stopColor="#8ccc28" />
            </linearGradient>
          </defs>
        </svg>
        <div className="flex flex-col justify-between">
          <div className="flex items-center h-[30px]">
            {quickAccess.map((name, i) => (
              <button key={i} aria-label={name} className="w-7 h-5 pl-[2px] flex items-center">
                <Icon name={name} />
              </button>
            ))}
            <button aria-label="Customize" className="ml-[10px] flex flex-col items-center gap-[2px]">
              <span className="w-[5px] h-px bg-[#555]" />
              <Caret className="text-[#555]" />
            </button>
          </div>
          <nav className="flex h-[22px] relative top-px" role="tablist">
            <button role="tab" aria-selected="true" className="w-[53px] pb-[2px] bg-white border border-b-0 border-[#d2d2d2] text-[#0072c6]">Home</button>
            <button role="tab" aria-selected="false" className="w-[48px] pb-[2px]">View</button>
            <button role="tab" aria-selected="false" className="w-[51px] pb-[2px]">Tools</button>
          </nav>
        </div>
      </div>
      <h1 className="h-[32px] leading-[32px] text-[#666]">878: Risk Management Conference - Event - EventPro</h1>
      <div className="flex flex-col items-end text-[#6b6b6b]">
        <div className="flex items-center h-[30px] gap-5 pr-[15px]">
          <button aria-label="Minimize" className="w-[10px]"><span className="block w-2 h-[3px] mt-1 bg-current" /></button>
          <button aria-label="Maximize" className="w-[10px] h-[10px] border border-t-[3px] border-current" />
          <button aria-label="Close window">
            <svg viewBox="0 0 10 10" className="w-[10px] h-[10px]"><path d="m1 1 8 8M9 1 1 9" stroke="currentColor" strokeWidth="2" /></svg>
          </button>
        </div>
        <button aria-label="Collapse ribbon" className="flex items-center h-6 pr-[18px]"><Chevron up className="text-[#6b6b6b]" /></button>
      </div>
    </header>
  )
}

type RibbonItem = { icon: string; lines: string[]; width: string; drop?: boolean; off?: boolean }

const ribbon: { title: string; box: string; items: RibbonItem[] }[] = [
  {
    title: 'Edit',
    box: 'pl-[6px] pr-[10px]',
    items: [
      { icon: 'gear', lines: ['Edit Event'], width: 'w-[56px]' },
      { icon: 'split', lines: ['Split', ''], width: 'w-[50px]', drop: true },
      { icon: 'merge', lines: ['Event', 'Merge'], width: 'w-[40px]' },
      { icon: 'copyTemplate', lines: ['Copy Template'], width: 'w-[90px]' },
      { icon: 'saveTemplate', lines: ['Save to', 'Template'], width: 'w-[52px]' },
      { icon: 'info', lines: ['Change', 'Status'], width: 'w-[62px]', drop: true },
      { icon: 'lock', lines: ['Set Lock', 'Level'], width: 'w-[46px]', drop: true },
      { icon: 'invoice', lines: ['Create', 'Invoice'], width: 'w-[56px]' },
      { icon: 'payment', lines: ['Create', 'Payment'], width: 'w-[46px]' },
      { icon: 'mail', lines: ['Send Email'], width: 'w-[74px]' },
      { icon: 'note', lines: ['Add Note'], width: 'w-[48px]' },
      { icon: 'clipcheck', lines: ['Add Task'], width: 'w-[66px]' },
      { icon: 'calcBlue', lines: ['Recalculate'], width: 'w-[58px]' },
    ],
  },
  {
    title: 'Open Related Record',
    box: '',
    items: [{ icon: 'related', lines: ['Open Related', 'Record'], width: 'w-[136px]', off: true }],
  },
  {
    title: 'View',
    box: 'pl-[6px] pr-[2px]',
    items: [
      { icon: 'itinCal', lines: ['Itinerary', 'Calendar'], width: 'w-[50px]' },
      { icon: 'refresh', lines: ['Refresh'], width: 'w-[56px]' },
      { icon: 'audit', lines: ['Audit', 'Log'], width: 'w-[40px]' },
      { icon: 'reports', lines: ['Reports'], width: 'w-[56px]' },
    ],
  },
  {
    title: 'Records Navigation',
    box: 'pl-[3px] pr-[6px]',
    items: [
      { icon: 'binoculars', lines: ['Find'], width: 'w-[44px]' },
      { icon: 'first', lines: ['First'], width: 'w-[46px]' },
      { icon: 'prev', lines: ['Previous'], width: 'w-[54px]' },
      { icon: 'next', lines: ['Next'], width: 'w-[44px]' },
      { icon: 'last', lines: ['Last'], width: 'w-[46px]' },
      { icon: 'hash', lines: ['By Booking #', ''], width: 'w-[74px]', drop: true },
    ],
  },
  {
    title: 'Close',
    box: '',
    items: [{ icon: 'close', lines: ['Close'], width: 'w-[58px]' }],
  },
]

function Ribbon() {
  return (
    <div className="flex h-[94px] shrink-0 border-y border-[#d2d2d2]">
      {ribbon.map((group) => (
        <Fragment key={group.title}>
          <section className={`flex flex-col justify-between ${group.box}`}>
            <div className="flex items-start pt-[6px]">
              {group.items.map((item) => (
                <button
                  key={item.lines.join(' ')}
                  disabled={item.off}
                  className={`flex flex-col items-center leading-[13px] whitespace-nowrap ${item.width} ${item.off ? 'text-[#9a9a9a]' : ''}`}
                >
                  <BigIcon name={item.icon} />
                  <span className="mt-[5px]">{item.lines[0]}</span>
                  {item.lines.length > 1 && (
                    <span className="flex items-center justify-center gap-[6px] h-[13px]">
                      {item.lines[1]}
                      {item.drop && <Caret className="text-[#777]" />}
                    </span>
                  )}
                </button>
              ))}
            </div>
            <p className="text-center leading-[17px]">{group.title}</p>
          </section>
          <div className="w-px my-[6px] bg-[#dcdcdc]" />
        </Fragment>
      ))}
    </div>
  )
}

const workplace = [
  { icon: 'person', label: 'My Details' },
  { icon: 'tasklist', label: 'Task List' },
  { icon: 'calendar', label: 'Venue Calendar' },
  { icon: 'doc', label: 'Event List', active: true },
]

const modules = [
  { icon: 'home', label: 'My Workplace', active: true },
  { icon: 'pin', label: 'Events' },
  { icon: 'bed', label: 'Lodging' },
  { icon: 'factory', label: 'Facilities' },
  { icon: 'contacts', label: 'CRM/Sales' },
]

function Grip({ count, vertical = false }: { count: number; vertical?: boolean }) {
  return (
    <span className={`flex gap-[2px] ${vertical ? 'flex-col' : ''}`}>
      {Array.from({ length: count }, (_, i) => (
        <span key={i} className="w-[2px] h-[2px] bg-[#7a7a7a]" />
      ))}
    </span>
  )
}

function Sidebar() {
  return (
    <aside className="flex flex-col w-[125px] shrink-0 border-r border-[#a9a9a9] whitespace-nowrap">
      <div className="flex items-center justify-between h-8 pb-[2px] pl-[6px] pr-2">
        <h2 className="text-[14px]">My Workplace</h2>
        <button aria-label="Collapse side bar">
          <svg viewBox="0 0 7 10" className="w-[7px] h-[10px]"><path d="M6 1 1.500 5 6 9" fill="none" stroke="#666" strokeWidth="1.600" /></svg>
        </button>
      </div>
      <nav>
        {workplace.map((item) => (
          <a key={item.label} href="#" className={`flex items-center gap-[5px] h-[26px] pl-[7px] ${item.active ? 'bg-[#efefef]' : ''}`}>
            <Icon name={item.icon} />
            {item.label}
          </a>
        ))}
      </nav>
      <div className="flex-1" />
      <div className="flex items-center justify-center h-3 bg-[#e8e8e8]"><Grip count={6} /></div>
      <nav>
        {modules.map((item) => (
          <a key={item.label} href="#" className={`flex items-center gap-[5px] h-9 pl-[11px] text-[14px] ${item.active ? 'text-[#0072c6]' : ''}`}>
            <Icon name={item.icon} />
            {item.label}
          </a>
        ))}
      </nav>
      <div className="flex items-center gap-3 h-[35px] pl-[17px] pt-[2px]">
        <button aria-label="Communications"><Icon name="chat" /></button>
        <button aria-label="Tasks"><Icon name="clipcheck" /></button>
        <button aria-label="Financial"><Icon name="calc" /></button>
        <button aria-label="More" className="pl-1"><Chevron className="text-[#666]" /></button>
      </div>
    </aside>
  )
}

function LookupButton({ label }: { label: string }) {
  return (
    <button aria-label={label} className="flex items-center justify-center w-4 shrink-0 bg-[#ececec] border-l border-[#ababab]">
      <svg viewBox="0 0 16 16" className="w-[14px] h-[14px]" aria-hidden="true">{art.lookup}</svg>
    </button>
  )
}

type FieldProps = {
  id: string
  label: string
  value: string
  labelWidth: string
  fill: string
  kind?: 'text' | 'lookup' | 'select'
  align?: string
}

function Field({ id, label, value, labelWidth, fill, kind = 'text', align = '' }: FieldProps) {
  return (
    <div className="flex h-5">
      <label htmlFor={id} className={`shrink-0 leading-[22px] whitespace-nowrap ${labelWidth}`}>{label}</label>
      <div className={`flex flex-1 min-w-0 border border-[#ababab] ${fill}`}>
        {kind === 'select' ? (
          <>
            <select id={id} defaultValue={value} className="flex-1 min-w-0 pl-[2px] appearance-none outline-none">
              <option>{value}</option>
            </select>
            <span className="flex items-center justify-center w-4 bg-[#ececec] border-l border-[#ababab]">
              <Chevron className="text-[#b4b4b4]" />
            </span>
          </>
        ) : (
          <input id={id} readOnly value={value} className={`flex-1 min-w-0 outline-none ${align || 'px-[2px]'}`} />
        )}
        {kind === 'lookup' && <LookupButton label={`Look up ${label}`} />}
      </div>
    </div>
  )
}

function FieldSplit() {
  return (
    <div className="flex w-[15px] justify-center pt-[13px]"><Grip count={4} vertical /></div>
  )
}

function EventHeader() {
  return (
    <fieldset className="mt-2 pl-1 pr-[5px] pb-[4px] border border-[#d2d2d2]">
      <legend className="ml-[7px] pl-px pr-1 h-[17px]">
        <span className="flex items-center gap-1 h-[15px]"><Icon name="pin" />Event</span>
      </legend>
      <div className="flex pt-[5px] text-[#3b3b3b]">
        <div className="w-[116px]">
          <Field id="book" label="Book #:" value="878" labelWidth="w-[44px]" fill="bg-[#f0f0f0]" align="text-right pr-[3px]" />
        </div>
        <FieldSplit />
        <div className="grid gap-[2px] grow basis-[348px]">
          <Field id="name" label="Event Name:*" value="Risk Management Conference" labelWidth="w-[74px]" fill="bg-[#f0f0f0]" />
          <Field id="client" label="Client:*" value="Duofix Solutions" labelWidth="w-[74px]" fill="bg-[#f0f0f0]" kind="lookup" />
        </div>
        <FieldSplit />
        <div className="grid gap-[2px] grow basis-[329px]">
          <Field id="range" label="Date Range:" value="Mon May 03 2021" labelWidth="w-[89px]" fill="bg-[#f0f0f0]" />
          <Field id="manager" label="Event Manager:*" value="RJV" labelWidth="w-[89px]" fill="bg-[#adff2f] text-black" kind="lookup" />
        </div>
        <FieldSplit />
        <div className="grid gap-[2px] grow basis-[264px]">
          <Field id="contract" label="Contract Status:" value="Waiting" labelWidth="w-[86px]" fill="bg-[#ffa500] text-black" kind="select" />
          <Field id="deposit" label="Deposit Status:" value="Waiting" labelWidth="w-[86px]" fill="bg-[#ffa500] text-black" kind="select" />
        </div>
        <FieldSplit />
        <div className="grid gap-[2px] grow basis-[253px]">
          <Field id="status" label="Status:*" value="Confirmed" labelWidth="w-[59px]" fill="bg-[#c9f26e] text-black" kind="lookup" />
          <Field id="lock" label="Lock Level:" value="Open" labelWidth="w-[59px]" fill="bg-[#32cd32] text-black" />
        </div>
      </div>
    </fieldset>
  )
}

type Tab = { icon: string; label: string; width: string }

// first tab is the open one
function TabStrip({ tabs }: { tabs: Tab[] }) {
  return (
    <div role="tablist" className="flex items-end h-[27px] -mb-px relative whitespace-nowrap">
      {tabs.map((tab, i) => (
        <button
          key={tab.label}
          role="tab"
          aria-selected={i === 0}
          className={`flex items-center pl-[10px] shrink-0 border border-[#a9a9a9] bg-white ${tab.width} ${
            i === 0 ? 'h-[27px] pb-[2px] gap-[3px] border-b-0 z-10' : 'h-[25px] gap-[2px]'
          } ${i === 1 ? '-ml-px' : ''}`}
        >
          <Icon name={tab.icon} />
          {tab.label}
        </button>
      ))}
    </div>
  )
}

const eventTabs: Tab[] = [
  { icon: 'detail', label: 'Event Detail', width: 'w-[101px]' },
  { icon: 'contacts', label: 'Contacts', width: 'w-[84px]' },
  { icon: 'badgeRed', label: 'Attendees', width: 'w-[91px]' },
  { icon: 'badgeBlue', label: 'Exhibitors', width: 'w-[88px]' },
  { icon: 'bed', label: 'Lodging', width: 'w-[78px]' },
  { icon: 'bed', label: 'Accommodations', width: 'w-[121px]' },
  { icon: 'plane', label: 'Travel', width: 'w-[71px]' },
  { icon: 'calc', label: 'Financial', width: 'w-[82px]' },
  { icon: 'chat', label: 'Communications', width: 'w-[118px]' },
  { icon: 'clipcheck', label: 'Tasks', width: 'w-[68px]' },
  { icon: 'clipdoc', label: 'Documents', width: 'w-[94px]' },
  { icon: 'template', label: 'Letter Templates', width: 'w-[122px]' },
  { icon: 'image', label: 'Images', width: 'w-[76px]' },
]

const resourceTabs: Tab[] = [
  { icon: 'building', label: 'Booked Locations', width: 'w-[126px]' },
  { icon: 'itinerary', label: 'Itinerary', width: 'w-[83px]' },
  { icon: 'staff', label: 'Staffing', width: 'w-[79px]' },
  { icon: 'misc', label: 'Miscellaneous', width: 'w-[106px]' },
  { icon: 'book', label: 'All Resources', width: 'w-[105px]' },
]

const setupTabs: Tab[] = [
  { icon: 'table', label: 'Setup', width: 'w-[71px]' },
  { icon: 'staff', label: 'Staffing', width: 'w-[79px]' },
  { icon: 'cutlery', label: 'Catering', width: 'w-[82px]' },
  { icon: 'drink', label: 'Beverages', width: 'w-[92px]' },
  { icon: 'package', label: 'Packages', width: 'w-[86px]' },
  { icon: 'itinerary', label: 'Itinerary', width: 'w-[83px]' },
  { icon: 'notes', label: 'Notes', width: 'w-[69px]' },
  { icon: 'floor', label: 'Floor Plans', width: 'w-[93px]' },
  { icon: 'image', label: 'Images', width: 'w-[76px]' },
]

// '|' is a separator, a trailing '+' adds a drop-down arrow
const locationTools = 'blank buildingGray cubes | save undo | pencil info+ bookPlus bookCopy bookAdd itinAdd hands tag mail noteSmall share+ calcWide del | lookup | views+ reset notebook columns | reports | upGray downGray | filter+ |'.split(' ')
const setupTools = 'blank cubes | editForm calcWide del | lookup | views+ reset notebook columns | up down | filter+ |'.split(' ')

function Separator() {
  return (
    <span className="flex w-[7px] justify-center"><span className="w-px h-[22px] bg-[#b5b5b5]" /></span>
  )
}

function Toolbar({ tools, id }: { tools: string[]; id: string }) {
  return (
    <div role="toolbar" className="flex items-center h-[30px] pt-[2px] pl-[2px]">
      {tools.map((tool, i) =>
        tool === '|' ? (
          <Separator key={i} />
        ) : (
          <button key={i} aria-label={tool.replace('+', '')} className={`flex items-center h-6 pl-[5px] ${tool.endsWith('+') ? 'w-[35px] gap-[3px]' : 'w-[26px]'}`}>
            <Icon name={tool.replace('+', '')} />
            {tool.endsWith('+') && <Caret />}
          </button>
        ),
      )}
      <div className="flex w-[150px] h-5 ml-1 mr-2 border border-[#ababab]">
        <input id={id} type="search" aria-label="Search" placeholder="Text to search..." className="flex-1 min-w-0 pl-1 outline-none placeholder:text-[#8c8c8c]" />
        <button aria-label="Search" className="flex items-center justify-center w-4 bg-[#ececec] border-l border-[#ababab]">
          <svg viewBox="0 0 16 16" className="w-[14px] h-[14px]">{art.search}</svg>
        </button>
      </div>
      <Separator />
      <button aria-label="Export" className="flex items-center w-[42px] h-6 pl-[5px] gap-[11px]">
        <Icon name="saveAs" />
        <Caret />
      </button>
      <Separator />
      <button aria-label="Preview" className="flex items-center w-[26px] h-6 pl-[5px]"><Icon name="preview" /></button>
    </div>
  )
}

function Check({ checked, label }: { checked: boolean; label: string }) {
  return (
    <span className="relative block w-[13px] h-[13px] mx-auto">
      <input type="checkbox" readOnly checked={checked} aria-label={label} className="block w-[13px] h-[13px] appearance-none bg-white border border-[#a0a0a0]" />
      {checked && (
        <svg viewBox="0 0 13 13" className="absolute inset-0 pointer-events-none" aria-hidden="true">
          <path d="M2.500 6.500 5.200 9.200 10.500 3.300" fill="none" stroke="#3a3a3a" strokeWidth="2" />
        </svg>
      )}
    </span>
  )
}

function SortMark() {
  return (
    <svg viewBox="0 0 9 5" className="w-[9px] h-[5px]" aria-hidden="true"><path d="M0 5h9L4.500 0z" fill="#8a8a8a" /></svg>
  )
}

const th = 'px-[3px] text-left font-normal border-r border-b border-[#a0a0a0] last:border-r-0'
const sumBox = 'flex items-center justify-end h-6 pr-1 border border-[#a0a0a0]'

function LocationGrid() {
  const td = 'px-[3px] bg-[#e5f1fb] border-r border-b border-[#cfd4d8]'
  return (
    <div className="m-px border border-[#a0a0a0]">
      <table className="w-full table-fixed border-separate border-spacing-0 whitespace-nowrap">
        <colgroup>
          <col className="w-[19px]" />
          <col className="w-[68px]" />
          <col className="w-[88px]" />
          <col className="w-[68px]" />
          <col className="w-[101px]" />
          <col className="w-[111px]" />
          <col className="w-[176px]" />
          <col className="w-[129px]" />
          <col className="w-[175px]" />
          <col className="w-[187px]" />
          <col className="w-[93px]" />
          <col className="w-[148px]" />
        </colgroup>
        <thead>
          <tr className="h-[19px]">
            <th className={th} />
            <th className={th}>Status</th>
            <th className={th}># Conflicts</th>
            <th className={th}>Conflict</th>
            <th className={th}>Has Conflicts</th>
            <th className={th}>Location Name</th>
            <th className={th}>
              <span className="flex items-center justify-between pr-[11px]">Booked From<SortMark /></span>
            </th>
            <th className={th}>Function From/To</th>
            <th className={th}>Booked To</th>
            <th className={th}>Description</th>
            <th className={th}>Attendance</th>
            <th className={th}>Net Charge Inc Tax</th>
          </tr>
        </thead>
        <tbody>
          <tr className="h-[21px]">
            <td className="border-r border-[#a0a0a0]">
              <svg viewBox="0 0 4 7" className="w-1 h-[7px] ml-2" aria-hidden="true"><path d="M0 0v7l4-3.500z" fill="#666" /></svg>
            </td>
            <td className="px-[3px] bg-[#c9f26e] text-black border-r border-b border-[#cfd4d8]">Confirmed</td>
            <td className={`${td} text-right`}>0</td>
            <td className="px-[3px] bg-[#32cd32] text-white border-r border-b border-[#cfd4d8]">None</td>
            <td className={td}><Check checked={false} label="Has Conflicts" /></td>
            <td className={td}>Emerald Gallery</td>
            <td className={td}>Mon May 03 2021 @ 6:00 AM</td>
            <td className={td}>8:00 AM-5:00 PM</td>
            <td className={td}>Mon May 03 2021 @ 7:00 PM</td>
            <td className={td}>Risk Management Conference</td>
            <td className={`${td} text-right`}>140</td>
            <td className="px-[3px] bg-[#e5f1fb] border-b border-[#cfd4d8] text-right">$319.00</td>
          </tr>
          <tr className="h-[26px]"><td colSpan={12} /></tr>
        </tbody>
        <tfoot>
          <tr className="h-[31px]">
            <td className="border-t border-[#a0a0a0]" />
            <td className="border-t border-[#a0a0a0] px-px"><div className={sumBox}>1</div></td>
            <td colSpan={9} className="border-t border-[#a0a0a0]" />
            <td className="border-t border-[#a0a0a0] px-px"><div className={sumBox}>$319.00</div></td>
          </tr>
        </tfoot>
      </table>
    </div>
  )
}

const items = [
  { no: 1, item: 'Chair-Ergo', own: true, qty: '140.00', charge: '$3.50', total: '$490.00' },
  { no: 2, item: "Table-Rct 8'", own: false, qty: '50.00', charge: '$8.50', total: '$425.00', active: true },
  { no: 3, item: 'Table-Cocktail', own: false, qty: '5.00', charge: '$5.25', total: '$26.25' },
]

function SetupGrid() {
  return (
    <div className="m-px border border-[#a0a0a0]">
      <table className="w-full table-fixed border-separate border-spacing-0 whitespace-nowrap">
        <colgroup>
          <col className="w-[19px]" />
          <col className="w-[66px]" />
          <col className="w-[112px]" />
          <col className="w-[148px]" />
          <col className="w-[96px]" />
          <col className="w-[52px]" />
          <col className="w-[117px]" />
          <col className="w-[105px]" />
          <col className="w-[120px]" />
          <col className="w-[62px]" />
          <col className="w-[60px]" />
          <col className="w-[105px]" />
          <col className="w-[76px]" />
          <col className="w-[76px]" />
          <col className="w-[113px]" />
          <col className="w-[16px]" />
        </colgroup>
        <thead>
          <tr className="h-[19px]">
            <th className={th} />
            <th className={th}><span className="flex items-center gap-[6px]">Item #<SortMark /></span></th>
            <th className={th}>Financial Subgroup</th>
            <th className={th}>Setup Item</th>
            <th className={th}>Item Date</th>
            <th className={th}>Billable</th>
            <th className={th}>Required From Time</th>
            <th className={th}>Required To Time</th>
            <th className={th}>Use Owner Quantity</th>
            <th className={th}>Quantity</th>
            <th className={th}>Charge</th>
            <th className={th}>Total Charge</th>
            <th className={th}>Discount</th>
            <th className={th}>Surcharge</th>
            <th className={th}>Net Charge</th>
            <th className={th} />
          </tr>
        </thead>
        <tbody>
          {items.map((row, i) => {
            const line = row.active
              ? 'border-r border-r-[#cfcfcf] border-y border-y-[#333] [border-top-style:dotted] [border-bottom-style:dotted]'
              : 'border-r border-b border-[#cfcfcf]'
            const td = `px-[3px] ${line} ${row.active ? 'bg-[#cde6f7]' : 'bg-[#f0f0f0]'}`
            return (
              <tr key={row.no} className="h-[21px]">
                <td className="border-r border-[#a0a0a0]">
                  {row.active && (
                    <svg viewBox="0 0 10 12" className="w-[10px] h-3 mx-auto" aria-hidden="true">
                      <path d="M3.500 10.500 2 9l.5-3L5 1.500 7 2.500 5.500 7z" fill="#fff" stroke="#555" />
                      <path d="M6 11h3" stroke="#555" />
                    </svg>
                  )}
                </td>
                <td className={`${td} text-right`}>{row.no}</td>
                <td className={`px-[3px] bg-[#ee82ee] text-black ${line}`}>Event</td>
                {row.active ? (
                  <td className={`p-0 bg-white text-black ${line}`}>
                    <div className="flex h-[19px]">
                      <select aria-label="Setup Item" defaultValue={row.item} className="flex-1 min-w-0 pl-[3px] appearance-none outline-none">
                        <option>{row.item}</option>
                      </select>
                      <span className="flex items-center justify-center w-4 bg-[#ececec] border-l border-[#cfcfcf]"><Chevron className="text-[#b4b4b4]" /></span>
                    </div>
                  </td>
                ) : (
                  <td className={td}>{row.item}</td>
                )}
                <td className={td}>Mon May 03 2021</td>
                <td className={td}><Check checked label={`Billable ${row.no}`} /></td>
                <td className={td}>6:00 AM</td>
                <td className={td}>7:00 PM</td>
                <td className={td}><Check checked={row.own} label={`Use Owner Quantity ${row.no}`} /></td>
                <td className={`${td} text-right`}>{row.qty}</td>
                <td className={`${td} text-right`}>{row.charge}</td>
                <td className={`${td} text-right`}>{row.total}</td>
                <td className={`${td} text-right`}>$0.00</td>
                <td className={`${td} text-right`}>$0.00</td>
                <td className={`${td} text-right`}>{row.total}</td>
                {i === 0 && (
                  <td rowSpan={4} className="p-0 bg-[#f0f0f0] align-top">
                    <div className="flex flex-col items-center h-[65px]">
                      <button aria-label="Scroll up" className="flex items-center justify-center h-[17px]"><Chevron up className="text-[#777]" /></button>
                      <span className="w-full h-[17px] pt-px bg-[#cacaca]"><span className="block w-[9px] h-[2px] mx-auto bg-[#3c8a2c]" /></span>
                      <span className="flex-1" />
                      <button aria-label="Scroll down" className="flex items-center justify-center h-[17px]"><Chevron className="text-[#777]" /></button>
                    </div>
                  </td>
                )}
              </tr>
            )
          })}
          <tr className="h-[2px]">
            <td className="border-r border-[#a0a0a0]" />
            <td className="bg-[#f0f0f0]" />
            <td className="bg-[#ee82ee]" />
            <td colSpan={12} className="bg-[#f0f0f0]" />
          </tr>
        </tbody>
        <tfoot>
          <tr className="h-[31px]">
            <td colSpan={3} className="border-t border-[#a0a0a0]" />
            <td className="border-t border-[#a0a0a0] px-px"><div className={sumBox}>18</div></td>
            <td colSpan={7} className="border-t border-[#a0a0a0]" />
            <td className="border-t border-[#a0a0a0] px-px"><div className={sumBox}>$15,481.75</div></td>
            <td className="border-t border-[#a0a0a0] px-px"><div className={sumBox}>$0.00</div></td>
            <td className="border-t border-[#a0a0a0] px-px"><div className={sumBox}>$0.00</div></td>
            <td className="border-t border-[#a0a0a0] px-px"><div className={sumBox}>$15,481.75</div></td>
            <td className="border-t border-[#a0a0a0]" />
          </tr>
        </tfoot>
      </table>
    </div>
  )
}

function EventDocument() {
  return (
    <main className="flex flex-col flex-1 min-w-0 px-[2px] pb-[2px]">
      <div className="flex items-end justify-between h-[30px] shrink-0 border-b-2 border-[#0072c6]">
        <div className="flex items-center w-[189px] h-[26px] pl-3 bg-[#0072c6] text-white">
          <Icon name="pin" />
          <span className="flex-1 pl-[2px]">878: Risk Management ...</span>
          <button aria-label="Close tab" className="pr-[10px]">
            <svg viewBox="0 0 8 8" className="w-2 h-2"><path d="m.7.7 6.600 6.600M7.300.7.7 7.300" stroke="currentColor" strokeWidth="1.600" /></svg>
          </button>
        </div>
        <button aria-label="Open documents" className="flex items-center h-[26px] pr-[6px]">
          <svg viewBox="0 0 8 4" className="w-2 h-1"><path d="M0 0h8L4 4z" fill="#6b6b6b" /></svg>
        </button>
      </div>
      <div className="flex flex-col flex-1 px-[5px] pb-[5px] border border-t-0 border-[#a9a9a9]">
        <EventHeader />
        <div className="h-[3px]" />
        <TabStrip tabs={eventTabs} />
        <div className="flex flex-col flex-1 p-[2px] border border-[#a9a9a9]">
          <TabStrip tabs={resourceTabs} />
          <div className="flex flex-col flex-1 px-[2px] pb-[2px] border border-[#a9a9a9]">
            <Toolbar tools={locationTools} id="find-location" />
            <div className="flex flex-col flex-1 border border-[#d2d2d2]">
              <LocationGrid />
              <div className="flex items-center justify-center h-3"><Grip count={5} /></div>
              <div className="flex flex-col flex-1 px-[6px] pb-[6px] pt-1">
                <TabStrip tabs={setupTabs} />
                <div className="flex flex-col flex-1 px-[2px] pb-[2px] border border-[#a9a9a9]">
                  <Toolbar tools={setupTools} id="find-item" />
                  <div className="flex-1 border border-[#d2d2d2]">
                    <SetupGrid />
                  </div>
                </div>
              </div>
            </div>
          </div>
        </div>
      </div>
    </main>
  )
}

function StatusBar() {
  return (
    <footer className="flex items-end justify-end h-[23px] shrink-0 bg-[#0072c6]">
      <svg viewBox="0 0 9 9" className="w-[9px] h-[9px] mr-[2px] mb-[2px]" aria-hidden="true">
        <path d="M7 0h2v2H7zM3.500 3.500h2v2h-2zM7 3.500h2v2H7zM0 7h2v2H0zM3.500 7h2v2h-2zM7 7h2v2H7z" fill="#9cc9ec" />
      </svg>
    </footer>
  )
}

// callout arrow laid over the window, pointing at the focused row
function CalloutArrow() {
  return (
    <svg viewBox="0 0 120 76" className="absolute left-[34px] top-[298px] w-[120px] h-[76px] pointer-events-none" aria-hidden="true">
      <path d="M0 0h7l84 53 11-2 15 24-31-4 6-9L0 5z" fill="#f00" />
      <path d="m103 50 14 25-31-4z" fill="#f00" />
    </svg>
  )
}

export default function App() {
  return (
    <div className="flex min-h-screen p-[7px] bg-black font-['DejaVu_Sans_Condensed','DejaVu_Sans',sans-serif] text-[11px] leading-[15px] text-[#3b3b3b]">
      <Gradients />
      <div className="relative flex flex-col flex-1 min-w-0 bg-white border border-[#0072c6]">
        <TitleBar />
        <Ribbon />
        <div className="flex flex-1 min-h-0">
          <Sidebar />
          <EventDocument />
        </div>
        <StatusBar />
        <CalloutArrow />
      </div>
    </div>
  )
}
